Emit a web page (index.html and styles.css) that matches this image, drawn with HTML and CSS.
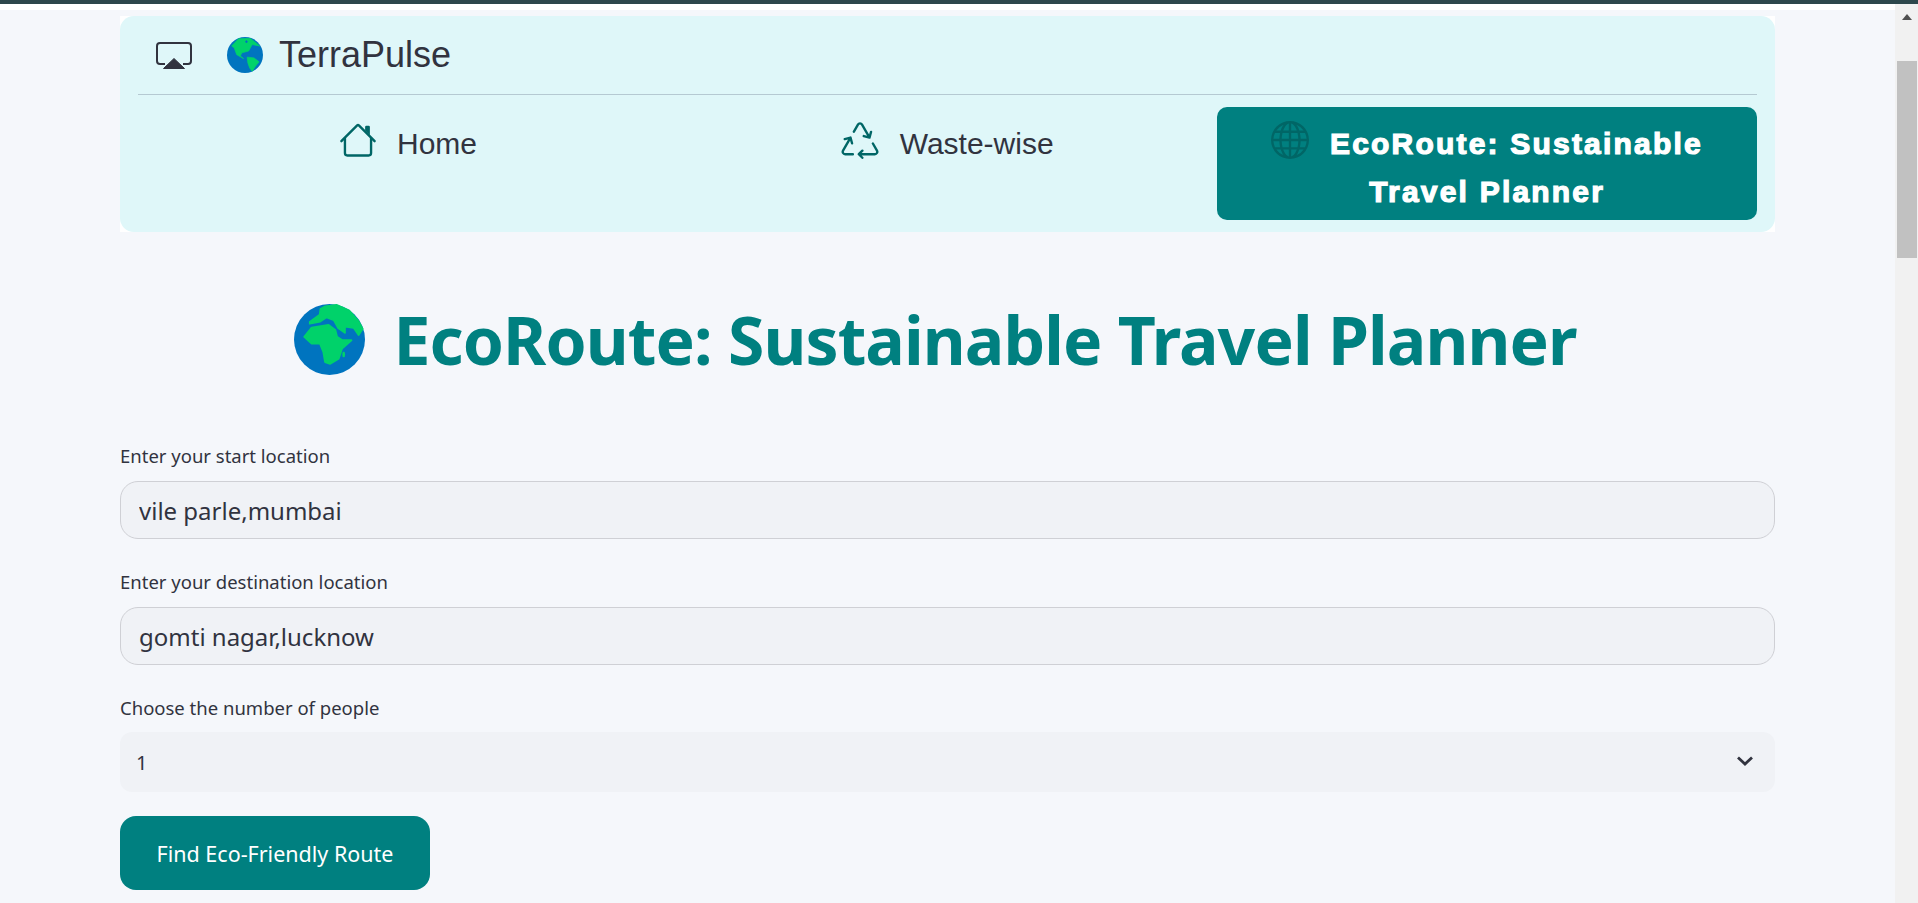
FILE: index.html
```html
<!DOCTYPE html>
<html lang="en">
<head>
  <meta charset="UTF-8" />
  <meta name="viewport" content="width=device-width, initial-scale=1.0"/>
  <title>TerraPulse - EcoRoute</title>
  <link rel="stylesheet" href="styles.css">
</head>
<body>

  <div class="top-line"></div>

  <div class="frame">
    <main class="page">
      <div class="white-strip"></div>

      <div class="nav-wrap">
        <nav class="nav-card">
          <div class="brand">
            <svg class="brand-icon" viewBox="0 0 36 27">
              <path d="M9 22H4a3 3 0 0 1-3-3V4a3 3 0 0 1 3-3h28a3 3 0 0 1 3 3v15a3 3 0 0 1-3 3h-5" fill="none" stroke="#31333f" stroke-width="2"/>
              <path d="M18 16.500L28.500 26.500H7.500z" fill="#31333f" stroke="#31333f" stroke-linejoin="round"/>
            </svg>
            <svg class="brand-globe" viewBox="0 0 100 100">
              <circle cx="50" cy="50" r="50" fill="#0074bf"/>
              <path d="M13 25L32 5L65 4L91 25L70 21L60 39L41 44L37 53L46 60L27 49L20 30z" fill="#00d26a" stroke="#00d26a" stroke-width="2" stroke-linejoin="round"/>
              <path d="M56 56L75 58L89 69L79 81L70 95L63 86L58 72z" fill="#00d26a" stroke="#00d26a" stroke-width="2" stroke-linejoin="round"/>
              <path d="M50 13h8M54 9v8" stroke="#0074bf" stroke-width="3"/>
            </svg>
            <span class="brand-name">TerraPulse</span>
          </div>

          <ul class="nav-items">
            <li class="nav-item">
              <svg class="nav-icon" viewBox="0 0 16 16">
                <path fill-rule="evenodd" d="M2 13.500V7h1v6.500a.5.5 0 0 0 .5.5h9a.5.5 0 0 0 .5-.5V7h1v6.500a1.500 1.500 0 0 1-1.500 1.500h-9A1.500 1.500 0 0 1 2 13.500zm11-11V6l-2-2V2.500a.5.5 0 0 1 .5-.5h1a.5.5 0 0 1 .5.5z"/>
                <path fill-rule="evenodd" d="M7.293 1.500a1 1 0 0 1 1.414 0l6.647 6.646a.5.5 0 0 1-.708.708L8 2.207 1.354 8.854a.5.5 0 1 1-.708-.708L7.293 1.500z"/>
              </svg>
              Home
            </li>
            <li class="nav-item">
              <svg class="nav-icon" viewBox="0 0 16 16">
                <path d="M9.302 1.256a1.500 1.500 0 0 0-2.604 0l-1.704 2.980a.5.5 0 0 0 .869.497l1.703-2.981a.5.5 0 0 1 .868 0l2.540 4.444-1.256-.337a.5.5 0 1 0-.260.966l2.415.647a.5.5 0 0 0 .613-.353l.647-2.415a.5.5 0 1 0-.966-.259l-.333 1.242-2.532-4.431zM2.973 7.773l-1.255.337a.5.5 0 1 1-.260-.966l2.416-.647a.5.5 0 0 1 .612.353l.647 2.415a.5.5 0 0 1-.966.259l-.333-1.242-2.545 4.454a.5.5 0 0 0 .434.748H5a.5.5 0 0 1 0 1H1.723A1.500 1.500 0 0 1 .421 12.240l2.552-4.467zm10.890 1.463a.5.5 0 1 0-.868.496l1.716 3.004a.5.5 0 0 1-.434.748h-5.570l.647-.646a.5.5 0 1 0-.708-.707l-1.500 1.500a.498.498 0 0 0 0 .707l1.500 1.500a.5.5 0 1 0 .708-.707l-.647-.647h5.570a1.500 1.500 0 0 0 1.302-2.244l-1.716-3.004z"/>
              </svg>
              Waste-wise
            </li>
            <li class="nav-item active">
              <svg class="nav-icon" viewBox="0 0 16 16">
                <path d="M0 8a8 8 0 1 1 16 0A8 8 0 0 1 0 8zm7.500-6.923c-.67.204-1.335.82-1.887 1.855A7.970 7.970 0 0 0 5.145 4H7.500V1.077zM4.090 4a9.267 9.267 0 0 1 .64-1.539 6.700 6.700 0 0 1 .597-.933A7.025 7.025 0 0 0 2.255 4H4.090zm-.582 3.500c.03-.877.138-1.718.312-2.500H1.674a6.958 6.958 0 0 0-.656 2.500h2.490zM4.847 5a12.500 12.500 0 0 0-.338 2.500H7.500V5H4.847zM8.500 5v2.500h2.990a12.495 12.495 0 0 0-.337-2.500H8.500zM4.510 8.500a12.500 12.500 0 0 0 .337 2.500H7.500V8.500H4.510zm3.990 0V11h2.653c.187-.765.306-1.608.338-2.500H8.500zM5.145 12c.138.386.295.744.468 1.068.552 1.035 1.218 1.650 1.887 1.855V12H5.145zm.182 2.472a6.696 6.696 0 0 1-.597-.933A9.268 9.268 0 0 1 4.090 12H2.255a7.024 7.024 0 0 0 3.072 2.472zM3.820 11a13.652 13.652 0 0 1-.312-2.500h-2.490c.062.89.291 1.733.656 2.500H3.820zm6.853 3.472A7.024 7.024 0 0 0 13.745 12H11.910a9.270 9.270 0 0 1-.64 1.539 6.688 6.688 0 0 1-.597.933zM8.500 12v2.923c.67-.204 1.335-.82 1.887-1.855.173-.324.33-.682.468-1.068H8.500zm3.680-1h2.146c.365-.767.594-1.610.656-2.500h-2.490a13.650 13.650 0 0 1-.312 2.500zm2.802-3.500a6.959 6.959 0 0 0-.656-2.500H12.180c.174.782.282 1.623.312 2.500h2.490zM11.270 2.461c.247.464.462.98.64 1.539h1.835a7.024 7.024 0 0 0-3.072-2.472c.218.284.418.598.597.933zM10.855 4a7.966 7.966 0 0 0-.468-1.068C9.835 1.897 9.170 1.282 8.500 1.077V4h2.355z"/>
              </svg>
              EcoRoute: Sustainable Travel Planner
            </li>
          </ul>
        </nav>
      </div>

      <h1 class="title">
        <svg class="title-globe" viewBox="0 0 100 100">
          <circle cx="50" cy="50" r="50" fill="#0074bf"/>
          <path d="M14.600 46.200L25 33.500L48.600 29.700L58 36.800L60.400 46.200L67.500 51L80.700 51L67.500 62.700L62.700 76.900L51 84L43.900 81.600L41.500 67.500L36.800 55.700L25 55.700z" fill="#00d26a" stroke="#00d26a" stroke-width="3" stroke-linejoin="round"/>
          <path d="M22 25L36 15L37 7L44 3L60 1L78 9L91 24L97 35L91 44L84 34L72 32L72 41L62 34L56 23L46 19L37 25L22 28z" fill="#00d26a" stroke="#00d26a" stroke-width="2" stroke-linejoin="round"/>
          <ellipse cx="70" cy="71" rx="2" ry="4" fill="#00d26a"/>
        </svg>
        EcoRoute: Sustainable Travel Planner
      </h1>

      <form class="form">
        <label class="field-label" for="start">Enter your start location</label>
        <input class="field-input" id="start" type="text" value="vile parle,mumbai" />

        <label class="field-label" for="dest">Enter your destination location</label>
        <input class="field-input" id="dest" type="text" value="gomti nagar,lucknow" />

        <label class="field-label label-select" for="people">Choose the number of people</label>
        <div class="select-wrap">
          <select class="field-select" id="people">
            <option>1</option>
            <option>2</option>
            <option>3</option>
          </select>
          <svg class="chevron" viewBox="0 0 16 10">
            <path d="M1 1.500L8 8L15 1.500" fill="none" stroke="#31333f" stroke-width="2.800"/>
          </svg>
        </div>

        <button class="submit" type="button">Find Eco-Friendly Route</button>
      </form>
    </main>

    <aside class="scrollbar">
      <div class="scroll-arrow"></div>
      <div class="scroll-thumb"></div>
    </aside>
  </div>

</body>
</html>
```

FILE: styles.css
```css
html, body {
  margin: 0;
  padding: 0;
  height: 903px;
  overflow: hidden;
  background: #f5f7fb;
  color: #31333f;
  font-family: "Noto Sans", sans-serif;
}

.top-line {
  height: 4px;
  background: #2d474c;
}

.frame {
  display: flex;
  height: 899px;
}

.page {
  flex: 1;
  padding: 0 120px;
}

.white-strip {
  height: 6px;
  margin: 0 -120px 6px;
  background: white;
}

/* nav */

.nav-wrap {
  background: white;
}

.nav-card {
  height: 216px;
  box-sizing: border-box;
  padding: 0 18px;
  background: #dff7f9;
  border-radius: 14px;
  font-family: "Liberation Sans", Arial, sans-serif;
}

.brand {
  display: flex;
  align-items: center;
  height: 78px;
  border-bottom: 1px solid #b5c9d2;
  margin-bottom: 12px;
  padding-left: 18px;
}

.brand-icon {
  width: 36px;
  height: 27px;
}

.brand-globe {
  width: 36px;
  height: 36px;
  margin-left: 35px;
}

.brand-name {
  font-size: 36px;
  margin-left: 16px;
}

.nav-items {
  list-style: none;
  margin: 0;
  padding: 0;
  display: grid;
  grid-template-columns: repeat(3, 1fr);
}

.nav-item {
  height: 113px;
  box-sizing: border-box;
  padding: 13px 4px 0;
  text-align: center;
  font-size: 30px;
  line-height: 48px;
  border-radius: 10px;
}

.nav-icon {
  width: 38px;
  height: 38px;
  fill: #006666;
  vertical-align: -5px;
  margin-right: 12px;
}

.nav-item.active {
  background: #008080;
  color: white;
  font-weight: bold;
  letter-spacing: 2.200px;
  -webkit-text-stroke: 1.200px white;
}

.nav-item.active .nav-icon {
  margin-right: 10px;
}

/* heading */

.title {
  display: flex;
  align-items: center;
  justify-content: center;
  gap: 28px;
  margin: 0;
  padding: 72px 24px 0 0;
  height: 71px;
  color: #008080;
  font-size: 66px;
  line-height: 71px;
  font-weight: bold;
  letter-spacing: -0.9px;
  white-space: nowrap;
}

.title-globe {
  width: 71px;
  height: 71px;
  flex: none;
}

/* form */

.form {
  display: flex;
  flex-direction: column;
  margin-top: 69px;
}

.field-label {
  font-size: 18.500px;
  line-height: 24px;
  margin-bottom: 13px;
}

.label-select {
  margin-bottom: 12px;
}

.field-input {
  height: 58px;
  box-sizing: border-box;
  padding: 0 18px;
  margin-bottom: 31px;
  background: #f0f2f6;
  border: 1.500px solid #cfd0d5;
  border-radius: 18px;
  color: #31333f;
  font-family: inherit;
  font-size: 24px;
}

.select-wrap {
  position: relative;
  margin-bottom: 24px;
}

.field-select {
  display: block;
  width: 100%;
  height: 60px;
  padding: 0 16px;
  appearance: none;
  background: #f0f2f6;
  border: none;
  border-radius: 12px;
  color: #31333f;
  font-family: inherit;
  font-size: 20px;
}

.chevron {
  position: absolute;
  right: 22px;
  top: 24px;
  width: 16px;
  height: 10px;
}

.submit {
  align-self: flex-start;
  width: 310px;
  height: 74px;
  background: #008080;
  border: none;
  border-radius: 16px;
  color: white;
  font-family: inherit;
  font-size: 21.500px;
}

/* fake page scrollbar */

.scrollbar {
  width: 23px;
  background: #f1f1f1;
  display: flex;
  flex-direction: column;
  align-items: center;
}

.scroll-arrow {
  width: 0;
  height: 0;
  margin-top: 10px;
  border-left: 5px solid transparent;
  border-right: 5px solid transparent;
  border-bottom: 6px solid #505050;
}

.scroll-thumb {
  width: 20px;
  height: 197px;
  margin-top: 41px;
  background: #c1c1c1;
}
```
